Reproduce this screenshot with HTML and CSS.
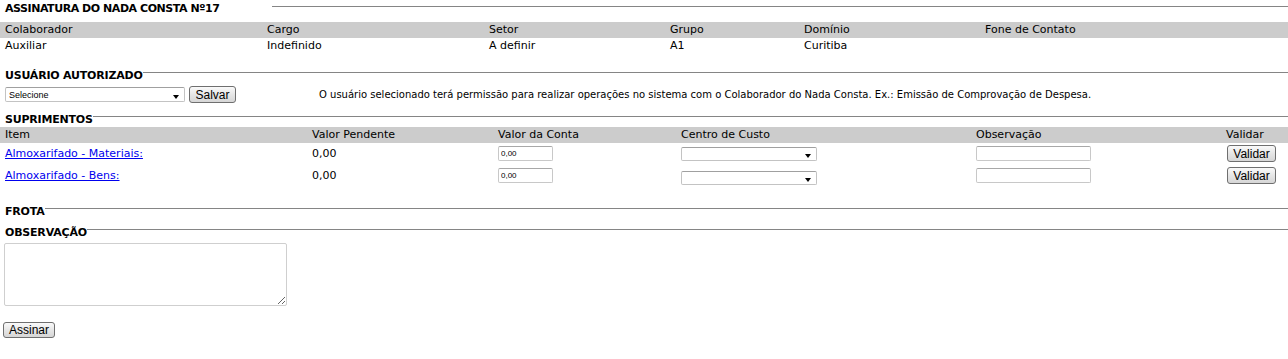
FILE: index.html
```html
<!DOCTYPE html>
<html lang="pt-BR">
<head>
    <meta charset="UTF-8">
    <title>Assinatura do Nada Consta</title>
    <link rel="stylesheet" href="styles.css">
</head>
<body>

<div class="section-title section-title-main">ASSINATURA DO NADA CONSTA Nº17</div>

<div class="info-grid info-head">
    <span>Colaborador</span>
    <span>Cargo</span>
    <span>Setor</span>
    <span>Grupo</span>
    <span>Domínio</span>
    <span>Fone de Contato</span>
</div>
<div class="info-grid info-row">
    <span>Auxiliar</span>
    <span>Indefinido</span>
    <span>A definir</span>
    <span>A1</span>
    <span>Curitiba</span>
    <span></span>
</div>

<div class="section-title section-user">USUÁRIO AUTORIZADO</div>
<div class="user-row">
    <span class="select-wrap select-user">
        <select class="select">
            <option>Selecione</option>
        </select>
    </span>
    <button class="button">Salvar</button>
    <span class="user-hint">O usuário selecionado terá permissão para realizar operações no sistema com o Colaborador do Nada Consta. Ex.: Emissão de Comprovação de Despesa.</span>
</div>

<div class="section-title section-supr">SUPRIMENTOS</div>
<div class="supr-grid supr-head">
    <span>Item</span>
    <span>Valor Pendente</span>
    <span>Valor da Conta</span>
    <span>Centro de Custo</span>
    <span>Observação</span>
    <span>Validar</span>
</div>
<div class="supr-grid supr-row">
    <a href="#" class="item-link">Almoxarifado - Materiais:</a>
    <span>0,00</span>
    <span><input type="text" class="input input-value" value="0,00"></span>
    <div class="cell"><span class="select-wrap select-cc"><select class="select"><option></option></select></span></div>
    <span><input type="text" class="input input-obs"></span>
    <span><button class="button button-validar">Validar</button></span>
</div>
<div class="supr-grid supr-row">
    <a href="#" class="item-link">Almoxarifado - Bens:</a>
    <span>0,00</span>
    <span><input type="text" class="input input-value" value="0,00"></span>
    <div class="cell"><span class="select-wrap select-cc select-low"><select class="select"><option></option></select></span></div>
    <span><input type="text" class="input input-obs"></span>
    <span><button class="button button-validar">Validar</button></span>
</div>

<div class="section-title section-frota">FROTA</div>
<div class="section-title section-obs">OBSERVAÇÃO</div>
<textarea class="obs-text"></textarea>

<div class="sign-row">
    <button class="button button-sign">Assinar</button>
</div>

</body>
</html>
```

FILE: styles.css
```css
body {
    font-family: 'DejaVu Sans', Verdana, sans-serif;
    font-size: 11px;
    color: #000;
    background-color: #fff;
    margin: 0;
}

.section-title {
    display: flex;
    padding-left: 5px;
    height: 13px;
    line-height: 13px;
    font-weight: bold;
    letter-spacing: -0.2px;
    white-space: nowrap;
}

.section-title::after {
    content: "";
    flex: 1;
    align-self: flex-start;
    margin-top: 3px;
    border-top: 1px solid #858585;
}

.section-title-main {
    margin-top: 2px;
    letter-spacing: -0.45px;
}

.section-title-main::after {
    margin-left: 53px;
    margin-top: 4px;
}

.info-grid {
    display: grid;
    grid-template-columns: 262px 222px 181px 134px 181px 1fr;
    padding-left: 5px;
    height: 16px;
    line-height: 16px;
}

.info-head {
    margin-top: 7px;
    background-color: #cccccc;
}

.section-user {
    margin-top: 15px;
}

.user-row {
    display: flex;
    align-items: center;
    padding-left: 5px;
    margin-top: 4px;
    height: 17px;
}

.user-hint {
    margin-left: 83px;
    font-size: 10px;
}

.select-wrap {
    position: relative;
    display: inline-block;
}

.select-wrap::after {
    content: "";
    position: absolute;
    right: 6px;
    bottom: 3px;
    border-left: 3px solid transparent;
    border-right: 3px solid transparent;
    border-top: 4px solid #000;
    pointer-events: none;
}

.select {
    appearance: none;
    -webkit-appearance: none;
    display: block;
    margin: 0;
    padding: 0 0 0 3px;
    border: 1px solid #c3c3c3;
    border-top-color: #a0a0a0;
    border-radius: 2px;
    background-color: #fff;
    font-family: 'Liberation Sans', Arial, sans-serif;
    font-size: 9px;
    color: #000;
    outline: none;
}

.select-user .select {
    width: 180px;
    height: 15px;
}

.select-cc .select {
    width: 136px;
    height: 14px;
}

.select-low {
    margin-top: 4px;
}

.button {
    margin: 0;
    padding: 0 5px;
    border: 1px solid #6f6f6f;
    border-radius: 3px;
    background: linear-gradient(#fafafa, #e6e6e6 50%, #d6d6d6);
    font-family: 'Liberation Sans', Arial, sans-serif;
    font-size: 12px;
    color: #000;
    height: 17px;
    line-height: 14px;
    cursor: pointer;
}

.user-row .button {
    margin-left: 4px;
    width: 47px;
}

.section-supr {
    margin-top: 10px;
}

.supr-grid {
    display: grid;
    grid-template-columns: 307px 186px 183px 295px 250px 1fr;
    padding-left: 5px;
}

.supr-head {
    margin-top: 1px;
    height: 16px;
    line-height: 16px;
    background-color: #cccccc;
}

.supr-row {
    height: 21px;
    align-items: center;
}

.supr-row > span {
    display: flex;
    align-items: center;
}

.supr-row + .supr-row {
    padding-top: 1px;
}

.item-link {
    color: #0000ee;
}

.input {
    margin: 0;
    padding: 0 2px;
    border: 1px solid #c8c8c8;
    border-top-color: #a8a8a8;
    border-radius: 2px;
    height: 15px;
    box-sizing: border-box;
    font-family: 'Liberation Sans', Arial, sans-serif;
    font-size: 8px;
    outline: none;
}

.input-value {
    width: 55px;
}

.input-obs {
    width: 115px;
}

.button-validar {
    width: 49px;
    margin-left: 1px;
}

.section-frota {
    margin-top: 19px;
}

.section-obs {
    margin-top: 8px;
}

.obs-text {
    display: block;
    margin: 4px 0 0 4px;
    width: 283px;
    height: 63px;
    box-sizing: border-box;
    border: 1px solid #cfcfcf;
    border-radius: 2px;
    outline: none;
}

.sign-row {
    margin-top: 16px;
    padding-left: 3px;
}

.button-sign {
    width: 52px;
    height: 16px;
}
```
